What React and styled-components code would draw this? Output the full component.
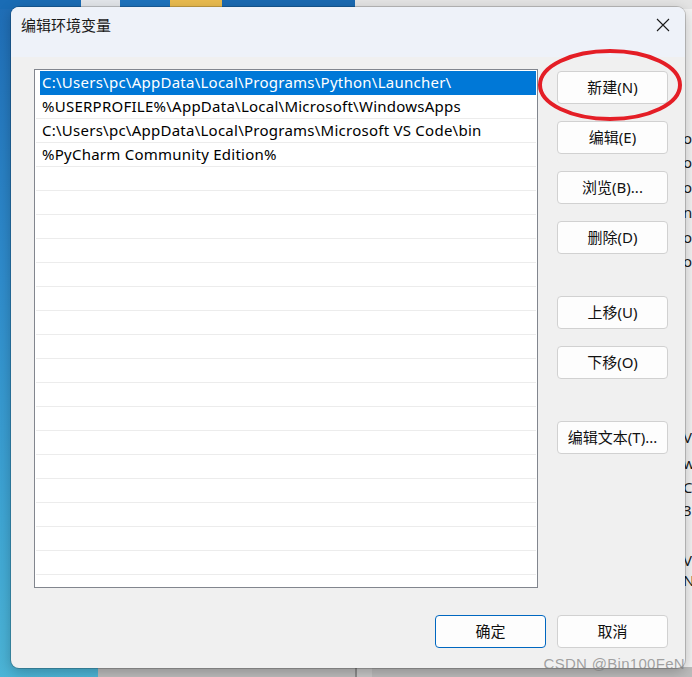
import React from "react";
import styled, { createGlobalStyle } from "styled-components";

const GlobalStyle = createGlobalStyle`
  html, body {
    margin: 0;
    padding: 0;
  }
  body {
    font-family: "Noto Sans", "Noto Sans CJK SC", sans-serif;
    color: #000;
  }
`;

const PATHS = [
  "C:\\Users\\pc\\AppData\\Local\\Programs\\Python\\Launcher\\",
  "%USERPROFILE%\\AppData\\Local\\Microsoft\\WindowsApps",
  "C:\\Users\\pc\\AppData\\Local\\Programs\\Microsoft VS Code\\bin",
  "%PyCharm Community Edition%",
];

const TOTAL_ROWS = 22;

const SIDE_BUTTONS = [
  { label: "新建(N)", gap: 0, circled: true },
  { label: "编辑(E)", gap: 17 },
  { label: "浏览(B)...", gap: 17 },
  { label: "删除(D)", gap: 17 },
  { label: "上移(U)", gap: 42 },
  { label: "下移(O)", gap: 17 },
  { label: "编辑文本(T)...", gap: 42 },
];

// fragments of the window that sits behind the dialog
const BEHIND_TEXT = [
  { y: 120, t: "oo" },
  { y: 144, t: "oo" },
  { y: 169, t: "oo" },
  { y: 194, t: "n" },
  { y: 219, t: "oo" },
  { y: 243, t: "oo" },
  { y: 419, t: "V" },
  { y: 445, t: "w" },
  { y: 469, t: "C" },
  { y: 492, t: "3" },
  { y: 542, t: "V" },
  { y: 562, t: "N" },
];

const App = () => {
  const rows = Array.from({ length: TOTAL_ROWS }, (_, i) => PATHS[i] || "");

  return (
    <>
      <GlobalStyle />
      <Desktop>
        <TopStrip>
          <Segment $w={81} $c="#1a6cb5" />
          <Segment $w={39} $c="#e3e6ea" />
          <Segment $w={50} $c="#1d73bd" />
          <Segment $w={52} $c="#e9bb4f" />
          <Segment $w={133} $c="#1a6ab2" />
          <Segment $w={337} $c="#e4e4e4" />
        </TopStrip>

        <BehindWindow>
          {BEHIND_TEXT.map((b) => (
            <BehindLine key={b.y} style={{ top: b.y }}>
              {b.t}
            </BehindLine>
          ))}
        </BehindWindow>

        <BottomStrip>
          <Segment $w={98} $c="transparent" />
          <Segment $w={257} $c="#bdbdbd" />
          <Segment $w={2} $c="#8d8d8d" />
          <Segment $w={15} $c="#c8c8c8" />
          <Segment $w={320} $c="#bcbcbc" />
        </BottomStrip>

        <Dialog>
          <TitleBar>
            <Title>编辑环境变量</Title>
            <CloseButton aria-label="关闭">
              <svg width="14" height="14" viewBox="0 0 14 14">
                <path d="M1 1 L13 13 M13 1 L1 13" stroke="#1a1a1a" strokeWidth="1.1" fill="none" />
              </svg>
            </CloseButton>
          </TitleBar>

          <Body>
            <ListBox>
              {rows.map((text, i) => (
                <Row key={i} $selected={i === 0}>
                  {text}
                </Row>
              ))}
            </ListBox>

            <SideColumn>
              {SIDE_BUTTONS.map((b) => (
                <ButtonSlot key={b.label} $gap={b.gap}>
                  <DialogButton>{b.label}</DialogButton>
                  {b.circled && (
                    <RedCircle viewBox="0 0 146 74" width="146" height="74">
                      <ellipse cx="73" cy="37" rx="70" ry="34" fill="none" stroke="#e41e26" strokeWidth="4" />
                    </RedCircle>
                  )}
                </ButtonSlot>
              ))}
            </SideColumn>
          </Body>

          <Footer>
            <DialogButton $primary>确定</DialogButton>
            <DialogButton>取消</DialogButton>
          </Footer>
        </Dialog>

        <Watermark>CSDN @Bin100FeN</Watermark>
      </Desktop>
    </>
  );
};

const Desktop = styled.div`
  position: relative;
  width: 692px;
  height: 677px;
  overflow: hidden;
  background: linear-gradient(
    170deg,
    #1f6db6 0%,
    #2f8ccc 35%,
    #3fa6d4 65%,
    #56c0d9 100%
  );
`;

const TopStrip = styled.div`
  position: absolute;
  top: 0;
  left: 0;
  right: 0;
  height: 9px;
  display: flex;
`;

const BottomStrip = styled.div`
  position: absolute;
  bottom: 0;
  left: 0;
  right: 0;
  height: 10px;
  display: flex;
`;

const Segment = styled.div`
  flex: 0 0 ${(p) => p.$w}px;
  background: ${(p) => p.$c};
`;

const BehindWindow = styled.div`
  position: absolute;
  top: 9px;
  right: 0;
  width: 20px;
  bottom: 10px;
  background: #f3f3f3;
  border-left: 1px solid #d0d0d0;
`;

const BehindLine = styled.div`
  position: absolute;
  left: 11px;
  font-size: 15px;
  line-height: 18px;
  color: #1a1a1a;
  white-space: nowrap;
`;

const Dialog = styled.div`
  position: absolute;
  left: 11px;
  top: 7px;
  width: 674px;
  height: 661px;
  box-sizing: border-box;
  display: flex;
  flex-direction: column;
  background: #f0f0f0;
  border-radius: 8px;
  box-shadow: 0 0 0 1px rgba(0, 0, 0, 0.18), 0 4px 14px rgba(0, 0, 0, 0.25);
  overflow: hidden;
`;

const TitleBar = styled.div`
  flex: 0 0 50px;
  display: flex;
  align-items: center;
  justify-content: space-between;
  padding: 0 12px 0 10px;
  background: #eef2f9;
  box-sizing: border-box;
`;

const Title = styled.div`
  font-family: "Noto Sans CJK SC", sans-serif;
  font-size: 15px;
  margin-top: -16px;
  color: #1a1a1a;
`;

const CloseButton = styled.div`
  width: 20px;
  height: 20px;
  display: flex;
  align-items: center;
  justify-content: center;
  margin-top: -14px;
`;

const Body = styled.div`
  display: flex;
  gap: 19px;
  padding: 12px 17px 0 23px;
`;

const ListBox = styled.div`
  width: 504px;
  height: 519px;
  box-sizing: border-box;
  border: 1px solid #82868e;
  background: #fff;
  overflow: hidden;
  padding: 1px 1px 0 1px;
`;

const Row = styled.div`
  height: 24px;
  box-sizing: border-box;
  margin-left: ${(p) => (p.$selected ? "4px" : "0")};
  padding-left: ${(p) => (p.$selected ? "2px" : "6px")};
  border-bottom: 1px solid ${(p) => (p.$selected ? "#0078d7" : "#ececec")};
  background: ${(p) => (p.$selected ? "#0078d7" : "transparent")};
  color: ${(p) => (p.$selected ? "#fff" : "#000")};
  font-family: "Noto Sans", "Noto Sans CJK SC", sans-serif;
  font-size: 15px;
  letter-spacing: 0.25px;
  line-height: 23px;
  white-space: nowrap;
  overflow: hidden;
`;

const SideColumn = styled.div`
  display: flex;
  flex-direction: column;
  padding-top: 2px;
`;

const ButtonSlot = styled.div`
  position: relative;
  margin-top: ${(p) => p.$gap}px;
`;

const DialogButton = styled.div`
  width: 111px;
  height: 33px;
  box-sizing: border-box;
  display: flex;
  align-items: center;
  justify-content: center;
  padding-bottom: 2px;
  background: #fdfdfd;
  border: 1px solid ${(p) => (p.$primary ? "#0067c0" : "#d1d1d1")};
  border-radius: 4px;
  font-family: "Noto Sans", "Noto Sans CJK SC", sans-serif;
  font-size: 15px;
  color: #111;
  white-space: nowrap;
`;

const RedCircle = styled.svg`
  position: absolute;
  left: -20px;
  top: -23px;
  pointer-events: none;
`;

const Footer = styled.div`
  display: flex;
  justify-content: flex-end;
  gap: 11px;
  padding: 27px 17px 0 0;
`;

const Watermark = styled.div`
  position: absolute;
  right: 7px;
  bottom: 5px;
  font-family: "Liberation Sans", sans-serif;
  font-size: 15px;
  color: rgba(125, 125, 125, 0.7);
  letter-spacing: 0.3px;
`;

export default App;
